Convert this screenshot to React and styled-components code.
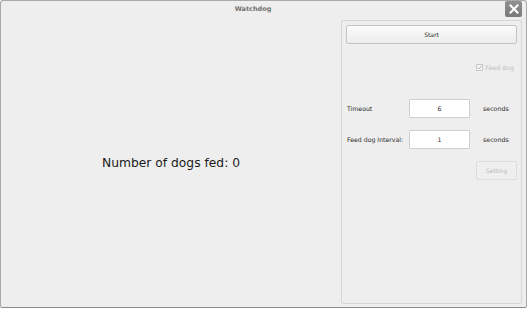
import React, { useState } from "react";
import styled, { createGlobalStyle } from "styled-components";

const Global = createGlobalStyle`
  html, body {
    margin: 0;
    padding: 0;
    background: #ffffff;
  }
  body {
    font-family: "DejaVu Sans", "Liberation Sans", sans-serif;
  }
`;

export default function App() {
  const [fed] = useState(0);
  const [timeout, setTimeoutValue] = useState("6");
  const [interval, setIntervalValue] = useState("1");

  return (
    <>
      <Global />
      <Window>
        <TitleBar>
          <Title>Watchdog</Title>
          <CloseButton aria-label="close">
            <svg width="10" height="10" viewBox="0 0 10 10">
              <path
                d="M1.5 1.5 L8.5 8.5 M8.5 1.5 L1.5 8.5"
                stroke="#ffffff"
                strokeWidth="2"
                strokeLinecap="square"
              />
            </svg>
          </CloseButton>
        </TitleBar>

        <Body>
          <Counter>
            <h2>Number of dogs fed: {fed}</h2>
          </Counter>

          <Panel>
            <PushButton>Start</PushButton>

            <CheckRow>
              <CheckBox>
                <svg width="5" height="5" viewBox="0 0 6 6">
                  <path
                    d="M0.8 3.2 L2.4 4.8 L5.4 0.8"
                    stroke="#b0b0b0"
                    strokeWidth="1"
                    fill="none"
                  />
                </svg>
              </CheckBox>
              <span>Feed dog</span>
            </CheckRow>

            <FormGrid>
              <Label>Timeout</Label>
              <SpinInput
                value={timeout}
                onChange={(e) => setTimeoutValue(e.target.value)}
              />
              <Unit>seconds</Unit>

              <Label>Feed dog Interval:</Label>
              <SpinInput
                value={interval}
                onChange={(e) => setIntervalValue(e.target.value)}
              />
              <Unit>seconds</Unit>
            </FormGrid>

            <ButtonRow>
              <PushButton $small disabled>
                Setting
              </PushButton>
            </ButtonRow>
          </Panel>
        </Body>
      </Window>
    </>
  );
}

const Window = styled.div`
  box-sizing: border-box;
  width: 527px;
  height: 308px;
  background-color: #eeeeee;
  border: 1px solid #a9a9a9;
  border-bottom-color: #8a8a8a;
  border-radius: 3px 3px 2px 2px;
  display: flex;
  flex-direction: column;
  overflow: hidden;
`;

const TitleBar = styled.div`
  height: 18px;
  display: flex;
  align-items: flex-start;
  padding-right: 4px;
`;

const Title = styled.span`
  flex: 1;
  text-align: center;
  font-size: 6.5px;
  font-weight: bold;
  color: #727272;
  margin-top: 4px;
`;

const CloseButton = styled.div`
  width: 17px;
  height: 16px;
  background: linear-gradient(#909090, #7a7a7a);
  border-radius: 2px;
  display: flex;
  align-items: center;
  justify-content: center;
`;

const Body = styled.div`
  flex: 1;
  display: flex;
  padding: 1px 4px 3px 0;
`;

const Counter = styled.div`
  flex: 1;
  display: flex;
  align-items: center;
  justify-content: center;

  h2 {
    margin: 2px 0 0 0;
    font-size: 12.3px;
    font-weight: normal;
    color: #1a1a1a;
  }
`;

const Panel = styled.div`
  box-sizing: border-box;
  width: 181px;
  border: 1px solid #d6d6d6;
  border-radius: 2px;
  padding: 4px 4px;
  display: flex;
  flex-direction: column;
`;

const PushButton = styled.button`
  box-sizing: border-box;
  height: 19px;
  width: ${(p) => (p.$small ? "41px" : "100%")};
  font-family: "DejaVu Sans", sans-serif;
  font-size: 6px;
  color: ${(p) => (p.disabled ? "#bcbcbc" : "#2a2a2a")};
  background: ${(p) =>
    p.disabled ? "#efefef" : "linear-gradient(#fbfbfb, #ececec)"};
  border: 1px solid ${(p) => (p.disabled ? "#dcdcdc" : "#c4c4c4")};
  border-radius: 2px;
  padding: 0;
`;

const CheckRow = styled.div`
  display: flex;
  align-items: center;
  justify-content: flex-end;
  gap: 2px;
  margin-top: 20px;
  padding-right: 3px;
  font-size: 6.3px;
  color: #bdbdbd;
`;

const CheckBox = styled.span`
  box-sizing: border-box;
  width: 7px;
  height: 7px;
  border: 1px solid #c8c8c8;
  background: #f4f4f4;
  display: flex;
  align-items: center;
  justify-content: center;
`;

const FormGrid = styled.div`
  display: grid;
  grid-template-columns: 63px 61px minmax(0, 1fr);
  row-gap: 12px;
  align-items: center;
  margin-top: 28px;
`;

const Label = styled.span`
  font-size: 6.2px;
  color: #2a2a2a;
  white-space: nowrap;
  padding-left: 1px;
`;

const SpinInput = styled.input`
  box-sizing: border-box;
  width: 61px;
  height: 19px;
  border: 1px solid #cfcfcf;
  border-radius: 1px;
  background: #ffffff;
  text-align: center;
  font-family: "DejaVu Sans", sans-serif;
  font-size: 6.3px;
  color: #333333;
  padding: 0;
  outline: none;
`;

const Unit = styled.span`
  font-size: 6.3px;
  color: #2a2a2a;
  margin-left: 13px;
`;

const ButtonRow = styled.div`
  display: flex;
  justify-content: flex-end;
  margin-top: 12px;
`;
